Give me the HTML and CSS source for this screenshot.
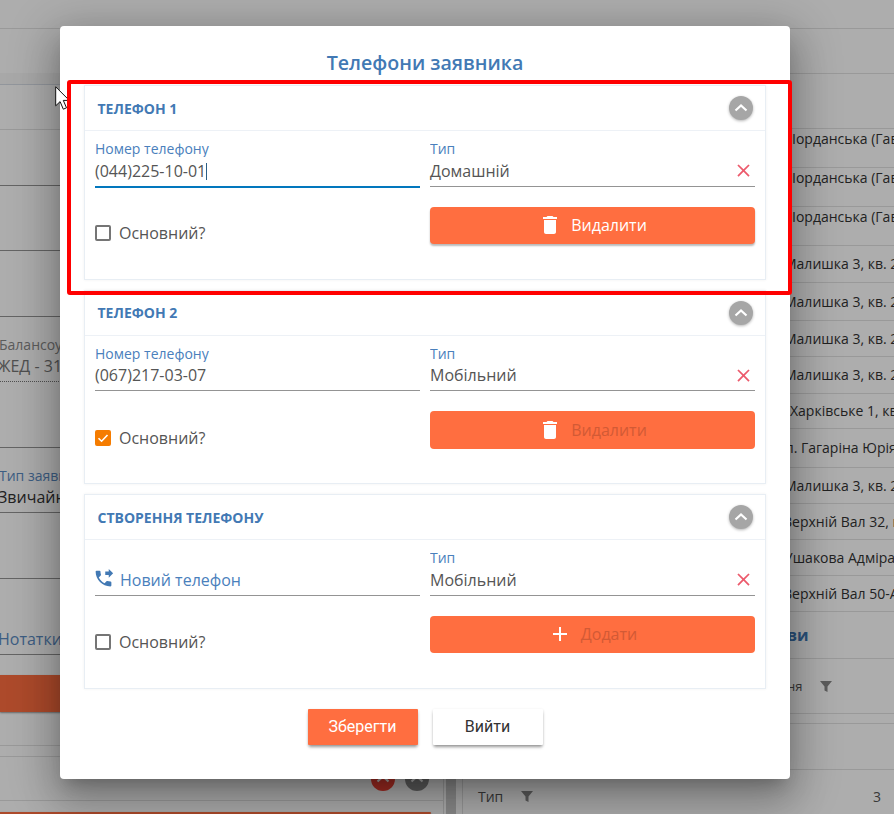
FILE: index.html
```html
<!DOCTYPE html>
<html lang="uk">
<head>
<meta charset="utf-8">
<title>Телефони заявника</title>
<link rel="stylesheet" href="styles.css">
</head>
<body>
<div class="page">
  <div class="bg">
    <div class="bg-left">
      <div class="bl light"></div>
      <div class="bl band-top"></div>
      <div class="bl band"></div>
      <div class="bl light"></div>
      <div class="bl dark"></div>
      <div class="bl dark"></div>
      <div class="bl dark"></div>
      <div class="bl dotted bg-field">
        <span class="bg-label grey">Балансоутримувач</span>
        <span class="bg-value grey">ЖЕД - 31</span>
      </div>
      <div class="bl dark"></div>
      <div class="bl dark bg-field">
        <span class="bg-label">Тип заявки</span>
        <span class="bg-value">Звичайна</span>
      </div>
      <div class="bl dark"></div>
      <div class="bl dark bg-field"><span class="bg-value blue">Нотатки</span></div>
      <div class="bl plain"></div>
      <div class="bg-orange"></div>
      <div class="bl light"></div>
      <div class="bl light"></div>
      <div class="bl light circles">
        <span class="bg-circle red"><svg viewBox="0 0 24 24"><path d="M6.500 14.500 12 9.500l5.500 5"/></svg></span>
        <span class="bg-circle grey-c"><svg viewBox="0 0 24 24"><path d="M6.500 14.500 12 9.500l5.500 5"/></svg></span>
      </div>
      <div class="bl plain"></div>
      <div class="bg-orange tail"></div>
    </div>
    <div class="bg-gutter"><div class="bg-gutter-inner"><div class="bg-gutter-bar"></div></div></div>
    <div class="bg-right">
      <div class="br"></div>
      <div class="br"></div>
      <div class="br"></div>
      <div class="br top at-i">Іорданська (Гаврилова</div>
      <div class="br top at-i">Іорданська (Гаврилова</div>
      <div class="br top at-i">Іорданська (Гаврилова</div>
      <div class="br at-m">Малишка 3, кв. 212</div>
      <div class="br at-m">Малишка 3, кв. 212</div>
      <div class="br at-m">Малишка 3, кв. 212</div>
      <div class="br at-m">Малишка 3, кв. 212</div>
      <div class="br at-k">Харківське 1, кв. 5</div>
      <div class="br at-p">п. Гагаріна Юрія 12</div>
      <div class="br at-m">Малишка 3, кв. 212</div>
      <div class="br at-v">Верхній Вал 32, кв. 1</div>
      <div class="br at-u">Ушакова Адмірала 4</div>
      <div class="br at-v">Верхній Вал 50-А, кв</div>
      <div class="br at-h bg-heading">ви</div>
      <div class="br at-h bg-small">ня
        <svg class="funnel" viewBox="0 0 12 11"><path d="M0 0h12L7.500 5.500V11l-3-1.500v-4z"/></svg>
      </div>
      <div class="br"></div>
      <div class="br"></div>
      <div class="br-last">
        <span>Тип</span>
        <svg class="funnel" viewBox="0 0 12 11"><path d="M0 0h12L7.500 5.500V11l-3-1.500v-4z"/></svg>
        <span class="br-count">3</span>
      </div>
    </div>
  </div>

  <div class="backdrop"></div>

  <div class="modal">
    <h1 class="modal-title">Телефони заявника</h1>

    <section class="card">
      <header class="card-head">
        <h2 class="card-title">Телефон 1</h2>
        <button class="collapse" type="button"><svg viewBox="0 0 24 24"><path d="M6.500 14.500 12 9.500l5.500 5"/></svg></button>
      </header>
      <div class="card-body">
        <div class="field active">
          <span class="field-label">Номер телефону</span>
          <div class="field-row"><span class="field-value">(044)225-10-01<i class="caret"></i></span></div>
        </div>
        <div class="field">
          <span class="field-label">Тип</span>
          <div class="field-row">
            <span class="field-value">Домашній</span>
            <svg class="clear" viewBox="0 0 24 24"><path d="M19 6.41 17.59 5 12 10.59 6.41 5 5 6.41 10.59 12 5 17.59 6.41 19 12 13.41 17.59 19 19 17.59 13.41 12z"/></svg>
          </div>
        </div>
        <label class="check"><span class="box"></span><span>Основний?</span></label>
        <button class="action raised" type="button">
          <svg class="action-icon" viewBox="0 0 24 24"><path d="M6 19c0 1.100.9 2 2 2h8c1.100 0 2-.9 2-2V7H6v12zM19 4h-3.500l-1-1h-5l-1 1H5v2h14V4z"/></svg>
          <span>Видалити</span>
        </button>
      </div>
    </section>

    <section class="card">
      <header class="card-head">
        <h2 class="card-title">Телефон 2</h2>
        <button class="collapse" type="button"><svg viewBox="0 0 24 24"><path d="M6.500 14.500 12 9.500l5.500 5"/></svg></button>
      </header>
      <div class="card-body">
        <div class="field">
          <span class="field-label">Номер телефону</span>
          <div class="field-row"><span class="field-value">(067)217-03-07</span></div>
        </div>
        <div class="field">
          <span class="field-label">Тип</span>
          <div class="field-row">
            <span class="field-value">Мобільний</span>
            <svg class="clear" viewBox="0 0 24 24"><path d="M19 6.41 17.59 5 12 10.59 6.41 5 5 6.41 10.59 12 5 17.59 6.41 19 12 13.41 17.59 19 19 17.59 13.41 12z"/></svg>
          </div>
        </div>
        <label class="check"><span class="box checked"><svg viewBox="0 0 16 16"><path d="M3.500 8.200 6.600 11.200 12.500 5"/></svg></span><span>Основний?</span></label>
        <button class="action disabled" type="button">
          <svg class="action-icon" viewBox="0 0 24 24"><path d="M6 19c0 1.100.9 2 2 2h8c1.100 0 2-.9 2-2V7H6v12zM19 4h-3.500l-1-1h-5l-1 1H5v2h14V4z"/></svg>
          <span>Видалити</span>
        </button>
      </div>
    </section>

    <section class="card">
      <header class="card-head">
        <h2 class="card-title">Створення телефону</h2>
        <button class="collapse" type="button"><svg viewBox="0 0 24 24"><path d="M6.500 14.500 12 9.500l5.500 5"/></svg></button>
      </header>
      <div class="card-body">
        <div class="field">
          <div class="field-row">
            <svg class="phone" viewBox="0 0 24 24"><path d="M18 11l5-5-5-5v3h-4v4h4v3zm2 4.500c-1.250 0-2.450-.2-3.570-.57-.35-.11-.74-.03-1.020.24l-2.200 2.200c-2.830-1.440-5.150-3.750-6.590-6.590l2.200-2.210c.28-.26.36-.65.25-1C8.700 6.450 8.500 5.250 8.500 4c0-.55-.45-1-1-1H4c-.55 0-1 .45-1 1 0 9.390 7.610 17 17 17 .55 0 1-.45 1-1v-3.500c0-.55-.45-1-1-1z"/></svg>
            <span class="field-value placeholder">Новий телефон</span>
          </div>
        </div>
        <div class="field">
          <span class="field-label">Тип</span>
          <div class="field-row">
            <span class="field-value">Мобільний</span>
            <svg class="clear" viewBox="0 0 24 24"><path d="M19 6.41 17.59 5 12 10.59 6.41 5 5 6.41 10.59 12 5 17.59 6.41 19 12 13.41 17.59 19 19 17.59 13.41 12z"/></svg>
          </div>
        </div>
        <label class="check"><span class="box"></span><span>Основний?</span></label>
        <button class="action disabled" type="button">
          <svg class="action-icon" viewBox="0 0 24 24"><path d="M19 13h-6v6h-2v-6H5v-2h6V5h2v6h6v2z"/></svg>
          <span>Додати</span>
        </button>
      </div>
    </section>

    <footer class="modal-foot">
      <button class="foot-btn save" type="button">Зберегти</button>
      <button class="foot-btn quit" type="button">Вийти</button>
    </footer>
  </div>

  <svg class="pointer" viewBox="0 0 14 25"><path d="M.7.8v19l4.400-4.200 3.200 7.600 3.200-1.400-3.200-7.400h6z"/></svg>
  <div class="frame"></div>
</div>
</body>
</html>
```

FILE: styles.css
```css
* { box-sizing: border-box; }
html, body { margin: 0; padding: 0; }
body { font-family: "Open Sans", "Noto Sans", sans-serif; background: #fff; overflow: hidden; }
.page { position: relative; width: 894px; height: 814px; overflow: hidden; background: #fff; }

/* dimmed page underneath */
.bg { display: flex; width: 894px; height: 814px; color: #333; font-size: 14px; }
.bg-left {
  flex: 0 0 443px;
  display: grid;
  grid-template-rows: 29px 44px 12px 45px 56px 65px 66px 65px 66px 65px 66px 76px 20px 37px 34px 11px 44px 11px 2px;
  overflow: hidden;
}
.bl { border-bottom: 1px solid #e2e2e2; }
.bl.dark { border-bottom-color: #949494; }
.bl.dotted { border-bottom: 1px dotted #777; }
.bl.plain { border-bottom: 0; }
.bl.band-top { border-bottom: 0; }
.bl.band { background: #f8f8f8; border-bottom-color: #d8dde6; }
.bg-field { display: flex; flex-direction: column; justify-content: flex-end; padding-bottom: 3px; }
.bg-label { font-size: 14px; line-height: 19px; color: #5b8bc2; white-space: nowrap; margin-left: -1px; }
.bg-value { font-size: 16px; line-height: 24px; margin-left: -2px; color: #333; white-space: nowrap; }
.bg-label.grey { color: #888; margin-left: -1px; }
.bg-value.grey { color: #777; margin-left: -3px; }
.bg-value.blue { color: #5b8bc2; }
.bg-orange { background: #ff6e40; margin-right: 12px; border-radius: 0 3px 3px 0; box-shadow: 0 1px 2px rgba(0,0,0,.4); }
.circles { display: flex; justify-content: flex-end; gap: 10px; padding: 10px 14px 0 0; align-items: flex-start; }
.bg-circle { width: 24px; height: 24px; border-radius: 50%; }
.bg-circle svg { display: block; width: 24px; height: 24px; fill: none; stroke: #fff; stroke-width: 2.200; }
.bg-circle.red { background: #f44336; }
.bg-circle.grey-c { background: #8a8a8a; }
.bg-gutter { flex: 0 0 20px; padding-top: 700px; }
.bg-gutter-inner { height: 114px; display: flex; justify-content: center; border-left: 1px solid #e0e0e0; border-right: 1px solid #e0e0e0; }
.bg-gutter-bar { width: 10px; margin-left: -4px; background: #ccc; }
.bg-right {
  flex: 1 1 0;
  min-width: 0;
  display: grid;
  grid-template-rows: 29px 45px 55px 39px 39px 39px 37px 38px 36px 37px 35px 39px 36px 36px 36px 36px 47px 55px 10px 46px 44px;
}
.br { display: flex; align-items: center; border-bottom: 1px solid #e2e2e2; white-space: nowrap; overflow: hidden; line-height: 20px; }
.br.top { align-items: flex-start; }
.at-i { padding-left: 329px; }
.at-m { padding-left: 321px; }
.at-h { padding-left: 324px; }
.at-k { padding-left: 327px; }
.at-p { padding-left: 322px; }
.at-v { padding-left: 320px; }
.at-u { padding-left: 321px; }
.bg-heading { font-size: 16px; font-weight: 700; color: #3f78b5; }
.bg-small { font-size: 13px; color: #555; gap: 18px; }
.funnel { width: 12px; height: 11px; fill: #888; flex: none; }
.br-last { display: flex; align-items: center; padding: 8px 0 0 15px; font-size: 14px; color: #555; }
.br-last .funnel { margin-left: 18px; }
.br-count { margin-left: auto; margin-right: 13px; }

.backdrop { position: absolute; inset: 0; background: rgba(0,0,0,.32); }

/* dialog */
.modal {
  position: absolute; left: 60px; top: 26px; width: 730px; height: 753px;
  padding: 0 24px; background: #fff; border-radius: 4px;
  box-shadow: 0 11px 15px -7px rgba(0,0,0,.2), 0 24px 38px 3px rgba(0,0,0,.14), 0 9px 46px 8px rgba(0,0,0,.22);
}
.modal-title { margin: 22px 0 7px; font-size: 19.600px; line-height: 30px; font-weight: 600; text-align: center; color: #4279b4; }
.card {
  height: 194.500px; margin-bottom: 10px;
  border: 1px solid #e8eef4; background: #fff;
  box-shadow: 0 0 3px rgba(0,0,0,.06);
}
.card-head { height: 45px; display: flex; align-items: center; justify-content: space-between; padding: 0 12px 0 12.500px; border-bottom: 1px solid #edf1f6; }
.card-title { margin: 0; padding-top: 1px; font-size: 14px; line-height: 20px; font-weight: 700; text-transform: uppercase; color: #4279b4; }
.collapse {
  width: 24px; height: 24px; padding: 0; border: 0; border-radius: 50%;
  background: #a6a6a6; box-shadow: 0 1px 3px rgba(0,0,0,.3); display: flex;
}
.collapse svg { width: 24px; height: 24px; fill: none; stroke: #fff; stroke-width: 2.200; }
.card-body { display: grid; grid-template-columns: 325px 325px; column-gap: 10px; row-gap: 20px; padding: 0 10px; }
.field { height: 55.500px; border-bottom: 1px solid #949494; display: flex; flex-direction: column; justify-content: flex-end; padding-bottom: 3px; }
.field.active { border-bottom: 2px solid #0277bd; height: 56.500px; margin-bottom: -1px; }
.field-label { display: block; height: 18px; overflow: hidden; font-size: 14px; line-height: 19px; color: #4a80bc; white-space: nowrap; margin-bottom: 1.500px; }
.field-row { display: flex; align-items: center; height: 24px; }
.field-value { flex: 1; font-size: 16px; line-height: 24px; color: #555; white-space: nowrap; }
.placeholder { color: #4a80bc; }
.caret { display: inline-block; width: 1px; height: 17px; background: #2a5f86; vertical-align: -3px; }
.clear { width: 21px; height: 21px; fill: #ec5a6c; margin-right: 1px; flex: none; }
.phone { width: 21px; height: 21px; fill: #4279b4; margin: -2px 6px 0 -2px; flex: none; }
.check { display: flex; align-items: center; gap: 8px; height: 16px; margin-top: 18.700px; font-size: 16px; color: #555; }
.box { width: 16px; height: 16px; border: 2px solid #757575; border-radius: 2px; flex: none; }
.box.checked { background: #f57c00; border-color: #f57c00; display: flex; }
.box.checked svg { width: 16px; height: 16px; margin: -2px; flex: none; fill: none; stroke: #fff; stroke-width: 1.600; }
.action {
  height: 37.500px; border: 0; border-radius: 4px; background: #ff6e40; color: #fff;
  font: 500 16px/24px "Open Sans", "Noto Sans", sans-serif;
  display: flex; align-items: center; justify-content: center; gap: 9px; padding: 0;
}
.action.raised { box-shadow: 0 2px 2px rgba(0,0,0,.28); }
.action.disabled span { color: #d25a35; }
.action-icon { width: 24px; height: 24px; fill: #fff; flex: none; }
.modal-foot { display: flex; justify-content: center; gap: 15px; margin-top: 20.500px; }
.foot-btn {
  width: 110px; height: 36px; border: 0; border-radius: 1px;
  font: 400 16px/36px Roboto, "Liberation Sans", sans-serif; padding: 0;
  box-shadow: 0 3px 3px -1px rgba(0,0,0,.35), 0 1px 3px rgba(0,0,0,.15);
}
.foot-btn.save { background: #ff6e40; color: #fff; }
.foot-btn.quit { background: #fff; color: #333; }

/* things lying on top */
.pointer { position: absolute; left: 55px; top: 86px; width: 14px; height: 25px; fill: #fff; stroke: #111; stroke-width: 1; }
.frame { position: absolute; left: 67px; top: 80px; width: 725px; height: 215px; border: 4px solid #f00; border-radius: 3px; }
```
